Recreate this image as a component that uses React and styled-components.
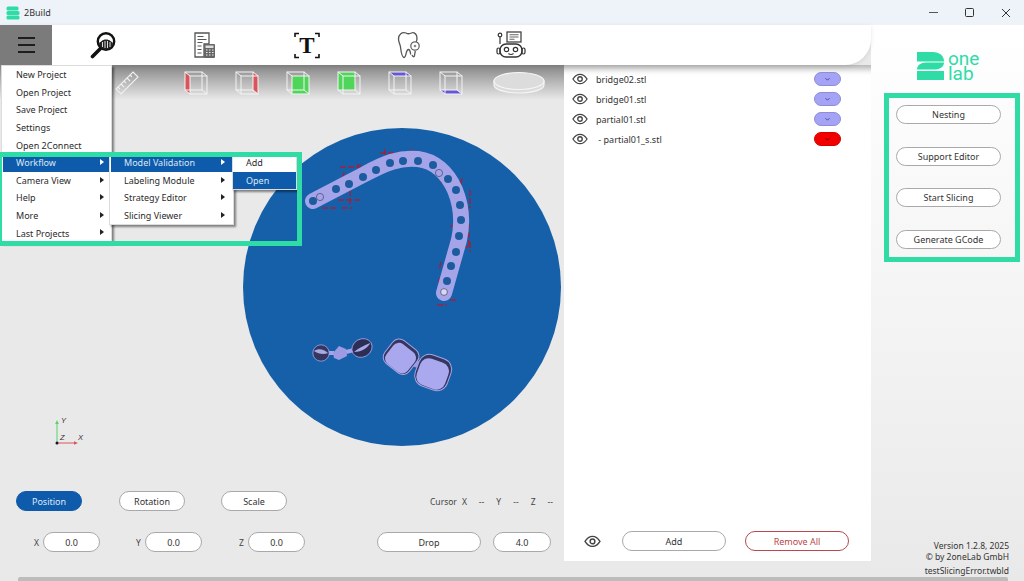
import styled, { createGlobalStyle } from "styled-components";

const GREEN = "#2fdca6";
const BLUE = "#0f5bab";
const FONT = '"Noto Sans", "Open Sans", sans-serif';

const Global = createGlobalStyle`
  html, body {
    margin: 0;
    padding: 0;
    background: #e9e9e9;
    overflow: hidden;
  }
  * { box-sizing: border-box; }
`;

const Window = styled.div`
  position: relative;
  width: 1024px;
  height: 581px;
  display: flex;
  flex-direction: column;
  overflow: hidden;
  font-family: ${FONT};
  font-size: 9px;
  color: #2b2b2b;
  background: #e9e9e9;
`;

const TitleBar = styled.div`
  height: 25px;
  flex: none;
  display: flex;
  align-items: center;
  padding-left: 6px;
  gap: 4px;
  background: #eef2f9;
  font-size: 9px;
  color: #333;
`;

const WinButtons = styled.div`
  margin-left: auto;
  display: flex;
  align-items: center;
  margin-right: 13px;
  gap: 27px;
`;

const Body = styled.div`
  flex: 1;
  display: flex;
  min-height: 0;
`;

const Workspace = styled.div`
  width: 871px;
  flex: none;
  display: flex;
  flex-direction: column;
`;

const Toolbar = styled.div`
  position: relative;
  z-index: 2;
  height: 40px;
  flex: none;
  display: flex;
  align-items: center;
  background: #fff;
  border-bottom-right-radius: 26px;
  box-shadow: 0 1px 4px rgba(0, 0, 0, 0.1);
`;

const MenuButton = styled.div`
  width: 52px;
  height: 40px;
  flex: none;
  display: flex;
  flex-direction: column;
  justify-content: center;
  align-items: center;
  gap: 5px;
  background: #7b7b7b;
  & span {
    width: 17px;
    height: 2px;
    background: #1d1d1d;
  }
`;

const ToolIcon = styled.div`
  width: 102px;
  flex: none;
  display: flex;
  justify-content: center;
  align-items: center;
`;

const Content = styled.div`
  flex: 1;
  display: flex;
  min-height: 0;
`;

const Viewport = styled.div`
  width: 564px;
  flex: none;
  display: flex;
  flex-direction: column;
`;

const ViewBar = styled.div`
  height: 35px;
  flex: none;
  display: flex;
  align-items: center;
  padding-left: 113px;
  background: linear-gradient(#858585 0%, #b4b4b4 45%, #e9e9e9 100%);
`;

const ViewIcon = styled.svg`
  flex: none;
  margin-left: ${(p) => p.$gap || 0}px;
`;

const Canvas = styled.div`
  position: relative;
  flex: 1;
`;

const Plate = styled.svg`
  position: absolute;
  left: 243px;
  top: 28px;
`;

const Axes = styled.svg`
  position: absolute;
  left: 45px;
  top: 314px;
`;

const Controls = styled.div`
  height: 86px;
  flex: none;
  display: flex;
  flex-direction: column;
  gap: 21px;
`;

const ControlRow = styled.div`
  display: flex;
  align-items: center;
  padding-left: ${(p) => p.$inset}px;
`;

const Pill = styled.div`
  width: ${(p) => p.$w}px;
  height: ${(p) => p.$h || 20}px;
  flex: none;
  margin-left: ${(p) => p.$gap || 0}px;
  display: flex;
  align-items: center;
  justify-content: center;
  border-radius: 10px;
  background: ${(p) => (p.$active ? BLUE : "#fff")};
  border: 1px solid ${(p) => (p.$active ? BLUE : p.$danger ? "#b9474b" : "#a9a9a9")};
  color: ${(p) => (p.$active ? "#dfe9f7" : p.$danger ? "#b9474b" : "#333")};
  font-size: 9px;
`;

const Field = styled.div`
  display: flex;
  align-items: center;
  gap: 3px;
  width: 67px;
  margin-left: ${(p) => p.$gap || 0}px;
  font-size: 8.5px;
  color: #444;
  & > span {
    width: 7px;
    text-align: center;
  }
`;

const CursorInfo = styled.div`
  margin-left: auto;
  margin-right: 11px;
  display: flex;
  gap: 12px;
  font-size: 8.5px;
  color: #444;
  & span:first-child {
    margin-right: -7px;
  }
`;

const ModelPanel = styled.div`
  width: 307px;
  flex: none;
  height: 496px;
  display: flex;
  flex-direction: column;
  padding: 4px 0 0 8px;
  background: #fff;
  box-shadow: inset 4px 30px 6px -26px rgba(0, 0, 0, 0.3);
`;

const ModelRow = styled.div`
  height: 20px;
  display: flex;
  align-items: center;
  font-size: 9px;
  color: #333;
  & > svg {
    margin-right: 8px;
    flex: none;
  }
`;

const ColorChip = styled.div`
  width: 27px;
  height: 14px;
  margin-left: auto;
  margin-right: 30px;
  display: flex;
  align-items: center;
  justify-content: center;
  border-radius: 7px;
  background: ${(p) => p.$color};
  border: 1px solid ${(p) => p.$edge};
`;

const PanelFooter = styled.div`
  margin-top: auto;
  height: 30px;
  margin-bottom: 5px;
  display: flex;
  align-items: center;
  padding-left: 12px;
`;

const SideBar = styled.div`
  flex: 1;
  display: flex;
  flex-direction: column;
  background: linear-gradient(#fff 0%, #f6f6f6 42%, #e9e9e9 100%);
`;

const Logo = styled.div`
  margin: 25px 0 0 46px;
  height: 31px;
  display: flex;
  gap: 4px;
  align-items: center;
  color: ${GREEN};
`;

const LogoText = styled.div`
  font-family: Roboto, sans-serif;
  font-weight: 400;
  font-size: 19px;
  line-height: 15px;
  & div {
    height: 15px;
  }
`;

const ActionBox = styled.div`
  width: 136px;
  height: 169px;
  margin: 12px 0 0 13px;
  padding: 7px 0 0 7px;
  display: flex;
  flex-direction: column;
  gap: 22.5px;
  border: 5px solid ${GREEN};
`;

const Version = styled.div`
  margin-top: auto;
  padding: 0 15px 1px 0;
  text-align: right;
  font-size: 8.5px;
  line-height: 11px;
  color: #333;
  & div:last-child {
    margin-top: 3px;
  }
`;

const ScrollBar = styled.div`
  height: 4px;
  flex: none;
  margin: 0 16px 0 18px;
  background: #bcbcbc;
  border-radius: 2px 2px 0 0;
`;

const MenuPanel = styled.div`
  position: absolute;
  z-index: 5;
  left: ${(p) => p.$left}px;
  top: ${(p) => p.$top}px;
  width: ${(p) => p.$w}px;
  background: #fff;
  padding: 0 ${(p) => p.$side}px 0 ${(p) => p.$side}px;
  border: 1px solid #dcdcdc;
  box-shadow: 2px 2px 2px rgba(0, 0, 0, 0.45);
`;

const MenuItem = styled.div`
  position: relative;
  height: 17.6px;
  display: flex;
  align-items: center;
  padding-left: ${(p) => p.$inset}px;
  font-size: 9px;
  background: ${(p) => (p.$on ? BLUE : "transparent")};
  color: ${(p) => (p.$on ? "#dbe7f6" : "#2b2b2b")};
  &::after {
    content: "";
    display: ${(p) => (p.$sub ? "block" : "none")};
    position: absolute;
    right: ${(p) => p.$arrow}px;
    top: 5px;
    border-left: 4px solid ${(p) => (p.$on ? "#fff" : "#222")};
    border-top: 3px solid transparent;
    border-bottom: 3px solid transparent;
  }
`;

const Highlight = styled.div`
  position: absolute;
  z-index: 6;
  left: 0;
  top: 152px;
  width: 302px;
  height: 94px;
  border: 5px solid ${GREEN};
  border-left-width: 2px;
  pointer-events: none;
`;

const Eye = ({ size = 16 }) => (
  <svg width={size} height={size * 0.75} viewBox="0 0 20 15">
    <path d="M1.2 7.5C4 3 7 1.6 10 1.6s6 1.4 8.8 5.9C16 12 13 13.4 10 13.4S4 12 1.2 7.5Z" fill="none" stroke="#444" strokeWidth="1.6" />
    <circle cx="10" cy="7.5" r="2.8" fill="none" stroke="#444" strokeWidth="1.7" />
  </svg>
);

const Chevron = ({ color }) => (
  <svg width="7" height="5" viewBox="0 0 7 5">
    <path d="M1.5 1.2 3.5 3.2 5.5 1.2" fill="none" stroke={color} strokeWidth="1" />
  </svg>
);

const cubeFaces = {
  left: { points: "1,1 6,5 6,23 1,19", fill: "#d9555b" },
  right: { points: "18,1 23,5 23,23 18,19", fill: "#d9555b" },
  front: { points: "6,5 23,5 23,23 6,23", fill: "#4fd65a" },
  back: { points: "1,1 18,1 18,19 1,19", fill: "#4fd65a" },
  top: { points: "1,1 18,1 23,5 6,5", fill: "#6457d6" },
  bottom: { points: "1,19 18,19 23,23 6,23", fill: "#6457d6" },
};

const Cube = ({ face, gap }) => (
  <ViewIcon $gap={gap} width="24" height="24" viewBox="0 0 24 24">
    <polygon {...cubeFaces[face]} />
    <g fill="none" stroke="#f4f4f4" strokeWidth="1">
      <rect x="1" y="1" width="17" height="18" />
      <rect x="6" y="5" width="17" height="18" />
      <path d="M1 1 6 5M18 1l5 4M1 19l5 4M18 19l5 4" />
    </g>
  </ViewIcon>
);

const Ruler = () => (
  <ViewIcon width="28" height="28" viewBox="0 0 28 28">
    <g fill="none" stroke="#f0f0f0" strokeWidth="1.1">
      <path d="M20 3 25 8 8 25 3 20Z" />
      <path d="M17 6l2 2M14 9l3 3M11 12l2 2M8 15l3 3M5 18l2 2" />
    </g>
  </ViewIcon>
);

const Disc = () => (
  <ViewIcon $gap={30} width="52" height="24" viewBox="0 0 52 24">
    <g fill="#dcdcdc" stroke="#f6f6f6" strokeWidth="1.2">
      <path d="M1 10v4c0 4.5 11 8 25 8s25-3.5 25-8v-4Z" />
      <ellipse cx="26" cy="10" rx="25" ry="8.5" />
    </g>
  </ViewIcon>
);

const Magnifier = () => (
  <svg width="26" height="28" viewBox="0 0 26 28">
    <path d="M10 18 2.5 25.5" stroke="#111" strokeWidth="3.6" strokeLinecap="round" />
    <circle cx="16" cy="10.5" r="8.2" fill="#fff" stroke="#111" strokeWidth="2.4" />
    <path d="M9 12c2-1 3-3.5 7-3.5s5.5 2.5 7 3.5c-1 4.5-4 6.5-7 6.5s-6-2-7-6.5Z" fill="#222" />
    <path d="M12.5 11v5M15 10v7M17.5 10v7M20 11v5" stroke="#ddd" strokeWidth="1" />
  </svg>
);

const DocCalc = () => (
  <svg width="22" height="27" viewBox="0 0 22 27">
    <path d="M1 1h14v11H10v13H1Z" fill="#fff" stroke="#555" strokeWidth="1.3" />
    <path d="M3.5 4.5h6M3.5 7.5h9M3.5 10.5h5M3.5 14h4M3.5 17.5h4M3.5 21h4" stroke="#555" strokeWidth="1.2" />
    <rect x="10" y="12" width="11" height="14" rx="1" fill="#666" />
    <rect x="11.5" y="13.5" width="8" height="2.5" fill="#ddd" />
    <path d="M12 18h1.5M15 18h1.5M18 18h1.5M12 20.5h1.5M15 20.5h1.5M18 20.5h1.5M12 23h1.5M15 23h1.5M18 23h1.5" stroke="#eee" strokeWidth="1.2" />
  </svg>
);

const TextTool = () => (
  <svg width="26" height="27" viewBox="0 0 26 27">
    <path d="M1 5V1.5h4M21 1.5h4V5M1 22v3.5h4M21 25.5h4V22" fill="none" stroke="#111" strokeWidth="1.6" />
    <text x="13" y="21" textAnchor="middle" fontFamily="'Liberation Serif', serif" fontWeight="700" fontSize="23" fill="#111">T</text>
  </svg>
);

const Tooth = () => (
  <svg width="24" height="28" viewBox="0 0 24 28">
    <path
      d="M9 2C5 .8 1.5 3 1.5 8c0 3 1.5 5 2 8 .5 4 1 10 3.5 10.5 2.5.5 1.5-8 4.5-8 1.8 0 1.8 3 2.2 5"
      fill="none"
      stroke="#555"
      strokeWidth="1.3"
    />
    <path d="M9 2c2 1.2 3.5 1 5.5 0 2.5-1 5.5 1 5.5 5 0 2-.5 3.5-1 5M15 24c1 2 2 2.5 2.500.5.3-1.500.5-3 .8-4.500" fill="none" stroke="#555" strokeWidth="1.3" />
    <circle cx="18" cy="15" r="4.2" fill="#fff" stroke="#666" strokeWidth="1.3" />
    <circle cx="18" cy="15" r="1.3" fill="#888" />
  </svg>
);

const Robot = () => (
  <svg width="30" height="28" viewBox="0 0 30 28">
    <circle cx="4" cy="4" r="1.8" fill="none" stroke="#333" strokeWidth="1.2" />
    <path d="M4 6v7" stroke="#333" strokeWidth="1.2" />
    <rect x="11" y="1" width="14" height="10" fill="#fff" stroke="#444" strokeWidth="1.3" />
    <path d="M13.5 3.8h9M13.5 6h9M13.5 8.3h5" stroke="#666" strokeWidth="1.1" />
    <rect x="4" y="13" width="22" height="13" rx="6" fill="#fff" stroke="#333" strokeWidth="1.4" />
    <rect x="1" y="17" width="3" height="6" rx="1.5" fill="none" stroke="#333" strokeWidth="1.2" />
    <rect x="26" y="17" width="3" height="6" rx="1.5" fill="none" stroke="#333" strokeWidth="1.2" />
    <circle cx="10.5" cy="18.5" r="2.2" fill="none" stroke="#333" strokeWidth="1.2" />
    <circle cx="19.5" cy="18.5" r="2.2" fill="none" stroke="#333" strokeWidth="1.2" />
    <path d="M12.5 22.5c1.5 1.2 3.5 1.2 5 0" fill="none" stroke="#333" strokeWidth="1.2" />
  </svg>
);

const LogoMark = () => (
  <svg width="27" height="28" viewBox="0 0 27 28">
    <path d="M0 0h16c6 0 11 3.5 11 9.5H0Z" fill={GREEN} />
    <path d="M27 10.5c0 4-4 7-9 7H0c0-4 3.5-7 9-7Z" fill={GREEN} />
    <path d="M0 19h27v9H0Z" fill={GREEN} />
  </svg>
);

const AppGlyph = () => (
  <svg width="14" height="14" viewBox="0 0 14 14">
    <rect x="0.5" y="0.5" width="12" height="4" rx="1.5" fill={GREEN} />
    <rect x="0.5" y="5" width="13" height="4" rx="1.5" fill={GREEN} />
    <rect x="0.5" y="9.5" width="13" height="4" rx="1.5" fill={GREEN} />
  </svg>
);

// page coordinates of the bar holes, the plate svg uses the same numbers
const holes = [
  [313, 201], [336, 189], [349, 184], [363, 177], [376, 170], [390, 163], [403, 161], [418, 161],
  [433, 165], [448, 179], [456, 190], [460, 205], [461, 220], [459, 236], [456, 252], [451, 266], [447, 281],
];

const BuildPlate = () => (
  <Plate width="318" height="318" viewBox="243 128 318 318">
    <circle cx="402" cy="287" r="159" fill="#1560a8" />
    <path
      d="M340 167h18v-3M360 164v12M344 172l-2 12M338 200h22M350 190v14M342 208h10M322 208h16M380 153h44M385 149v8M412 149v8M437 172l10-6M440 182h23M462 178l-2 14M470 190v18M468 208l1 40M450 226h20M462 247h9M470 242v10M441 262l-2 8M462 262h-4M439 278v10M450 300h6M437 305h10"
      fill="none"
      stroke="#a02040"
      strokeWidth="1.4"
      strokeDasharray="6 2"
    />
    <path
      d="M313 201 363 175C385 163 400 157 418 159C434 161 447 172 455 190C462 207 463 222 459 240L444 293"
      fill="none"
      stroke="#a5a4e8"
      strokeWidth="16"
      strokeLinecap="round"
      strokeLinejoin="round"
    />
    {holes.map(([x, y]) => (
      <circle key={x + "-" + y} cx={x} cy={y} r="4" fill="#1c5c9e" />
    ))}
    <circle cx="320" cy="197" r="3.6" fill="none" stroke="#50507a" strokeWidth="0.8" />
    <circle cx="439" cy="173" r="3.6" fill="none" stroke="#50507a" strokeWidth="0.8" />
    <circle cx="444" cy="292" r="3.4" fill="#d8d8f0" stroke="#50507a" strokeWidth="0.8" />
    <g stroke="#a5a4e8" strokeWidth="0.8">
      <path d="M329 353h5M346 352l8-2" strokeWidth="4" />
      <circle cx="321" cy="353" r="8.2" fill="#35365e" />
      <path d="M314 351c4-3 10-2 14 2-4 2-10 1-14-2Z" fill="#a9a8e6" stroke="none" />
      <path d="M333 353l6-7 7 3 1 7-8 4-5-2Z" fill="#9c9be4" stroke="none" />
      <ellipse cx="362" cy="348" rx="10.5" ry="9" fill="#2d2e55" transform="rotate(-30 362 348)" />
      <path d="M354 352c3-3 9-6 16-9-1 4-8 9-16 9Z" fill="#a9a8e6" stroke="none" />
    </g>
    <g>
      <path d="M414 363l8 3" stroke="#9b9be2" strokeWidth="7" />
      <rect x="386" y="342" width="31" height="29" rx="8" fill="#35365e" stroke="#a5a4e8" transform="rotate(38 401 356)" />
      <rect x="388.5" y="345.5" width="27" height="25" rx="7" fill="#a9a7ee" transform="rotate(38 401 356)" />
      <rect x="416" y="356" width="34" height="33" rx="11" fill="#35365e" stroke="#a5a4e8" transform="rotate(20 433 373)" />
      <rect x="418" y="360" width="30" height="28" rx="9" fill="#aaa8ef" transform="rotate(20 433 373)" />
    </g>
  </Plate>
);

const AxisGizmo = () => (
  <Axes width="42" height="36" viewBox="0 0 42 36">
    <path d="M12 29V9" stroke="#5ad265" strokeWidth="1" />
    <path d="M12 6l-1.8 4h3.6Z" fill="#5ad265" />
    <path d="M12 29h18" stroke="#e0525a" strokeWidth="1" />
    <path d="M33 29l-4-1.8v3.6Z" fill="#e0525a" />
    <circle cx="12" cy="29" r="1.5" fill="#12123a" />
    <g fontFamily="'Liberation Sans', sans-serif" fontStyle="italic" fontSize="7.5" fill="#333">
      <text x="16" y="9">Y</text>
      <text x="15" y="26">Z</text>
      <text x="33" y="26">X</text>
    </g>
  </Axes>
);

const models = [
  { name: "bridge02.stl", color: "#a5a3f5", edge: "#8f8dd6" },
  { name: "bridge01.stl", color: "#a5a3f5", edge: "#8f8dd6" },
  { name: "partial01.stl", color: "#a5a3f5", edge: "#8f8dd6" },
  { name: "\u00a0- partial01_s.stl", color: "#f20000", edge: "#d20000" },
];

const mainMenu = ["New Project", "Open Project", "Save Project", "Settings", "Open 2Connect", "Workflow", "Camera View", "Help", "More", "Last Projects"];
const hasSub = ["Workflow", "Camera View", "Help", "More", "Last Projects"];
const workflowMenu = ["Model Validation", "Labeling Module", "Strategy Editor", "Slicing Viewer"];

export default function App() {
  return (
    <Window>
      <Global />
      <TitleBar>
        <AppGlyph />
        <span>2Build</span>
        <WinButtons>
          <svg width="9" height="9" viewBox="0 0 9 9"><path d="M0 4.5h9" stroke="#555" strokeWidth="1" /></svg>
          <svg width="9" height="9" viewBox="0 0 9 9"><rect x="0.5" y="0.5" width="8" height="8" rx="1" fill="none" stroke="#333" strokeWidth="1" /></svg>
          <svg width="10" height="10" viewBox="0 0 10 10"><path d="M1 1l8 8M9 1 1 9" stroke="#333" strokeWidth="1" /></svg>
        </WinButtons>
      </TitleBar>
      <Body>
        <Workspace>
          <Toolbar>
            <MenuButton><span /><span /><span /></MenuButton>
            <ToolIcon><Magnifier /></ToolIcon>
            <ToolIcon><DocCalc /></ToolIcon>
            <ToolIcon><TextTool /></ToolIcon>
            <ToolIcon><Tooth /></ToolIcon>
            <ToolIcon><Robot /></ToolIcon>
          </Toolbar>
          <Content>
            <Viewport>
              <ViewBar>
                <Ruler />
                <Cube face="left" gap={43} />
                <Cube face="right" gap={27} />
                <Cube face="front" gap={27} />
                <Cube face="back" gap={27} />
                <Cube face="top" gap={27} />
                <Cube face="bottom" gap={27} />
                <Disc />
              </ViewBar>
              <Canvas>
                <BuildPlate />
                <AxisGizmo />
              </Canvas>
              <Controls>
                <ControlRow $inset={16}>
                  <Pill $w={66} $active>Position</Pill>
                  <Pill $w={66} $gap={37}>Rotation</Pill>
                  <Pill $w={66} $gap={36}>Scale</Pill>
                  <CursorInfo>
                    <span>Cursor</span><span>X</span><span>--</span><span>Y</span><span>--</span><span>Z</span><span>--</span>
                  </CursorInfo>
                </ControlRow>
                <ControlRow $inset={33}>
                  <Field><span>X</span><Pill $w={57}>0.0</Pill></Field>
                  <Field $gap={35}><span>Y</span><Pill $w={57}>0.0</Pill></Field>
                  <Field $gap={36}><span>Z</span><Pill $w={57}>0.0</Pill></Field>
                  <Pill $w={104} $gap={72}>Drop</Pill>
                  <Pill $w={58} $gap={12}>4.0</Pill>
                </ControlRow>
              </Controls>
            </Viewport>
            <ModelPanel>
              {models.map((m) => (
                <ModelRow key={m.name}>
                  <Eye />
                  <span>{m.name}</span>
                  <ColorChip $color={m.color} $edge={m.edge}>
                    <Chevron color={m.color === "#f20000" ? "#7a0000" : "#4a4a9a"} />
                  </ColorChip>
                </ModelRow>
              ))}
              <PanelFooter>
                <Eye size={17} />
                <Pill $w={104} $gap={21}>Add</Pill>
                <Pill $w={104} $gap={19} $danger>Remove All</Pill>
              </PanelFooter>
            </ModelPanel>
          </Content>
        </Workspace>
        <SideBar>
          <Logo>
            <LogoMark />
            <LogoText><div>one</div><div>lab</div></LogoText>
          </Logo>
          <ActionBox>
            <Pill $w={105} $h={19}>Nesting</Pill>
            <Pill $w={105} $h={19}>Support Editor</Pill>
            <Pill $w={105} $h={19}>Start Slicing</Pill>
            <Pill $w={105} $h={19}>Generate GCode</Pill>
          </ActionBox>
          <Version>
            <div>Version 1.2.8, 2025</div>
            <div>© by 2oneLab GmbH</div>
            <div>testSlicingError.twbld</div>
          </Version>
        </SideBar>
      </Body>
      <ScrollBar />

      <MenuPanel $left={1} $top={65} $w={111} $side={1}>
        {mainMenu.map((item) => (
          <MenuItem key={item} $inset={13} $on={item === "Workflow"} $sub={hasSub.includes(item)} $arrow={6}>
            {item}
          </MenuItem>
        ))}
      </MenuPanel>
      <MenuPanel $left={109} $top={153} $w={125} $side={1}>
        {workflowMenu.map((item, i) => (
          <MenuItem key={item} $inset={13} $on={i === 0} $sub $arrow={7}>
            {item}
          </MenuItem>
        ))}
      </MenuPanel>
      <MenuPanel $left={232} $top={153} $w={65} $side={0}>
        <MenuItem $inset={13}>Add</MenuItem>
        <MenuItem $inset={13} $on>Open</MenuItem>
      </MenuPanel>
      <Highlight />
    </Window>
  );
}
